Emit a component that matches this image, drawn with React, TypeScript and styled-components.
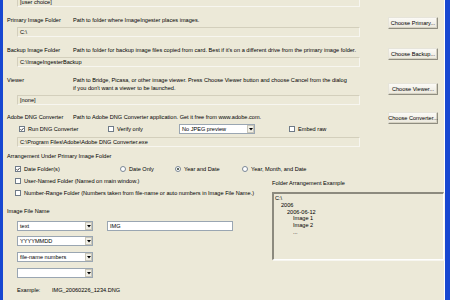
import React from "react";
import styled, { createGlobalStyle } from "styled-components";

const Global = createGlobalStyle`
  html, body { margin: 0; padding: 0; background: #ECE9D8; }
  * { box-sizing: border-box; }
`;

const Window = styled.div`
  width: 450px;
  height: 300px;
  overflow: hidden;
  background: #ece9d8;
  border-left: 3px solid #1747d1;
  border-right: 5px solid #1747d1;
  box-shadow: inset -1px 0 0 #ffffff;
  padding-left: 4px;
  display: flex;
  flex-direction: column;
  font-family: "Liberation Sans", Arial, sans-serif;
  font-size: 5.6px;
  line-height: 8px;
  color: #000;
`;

const Section = styled.div<{ $mt: number }>`
  display: flex;
  align-items: flex-start;
  margin-top: ${(p) => p.$mt}px;
`;

const Stack = styled.div`
  width: 353px;
  display: flex;
  flex-direction: column;
`;

const HeaderRow = styled.div`
  display: flex;
  min-height: 8px;
`;

const Label = styled.div`
  width: 66px;
  flex: none;
  white-space: nowrap;
`;

const Desc = styled.div`
  flex: 1;
  white-space: nowrap;
`;

const Field = styled.div<{ $mt?: number }>`
  margin-left: 10px;
  margin-top: ${(p) => (p.$mt ?? 3)}px;
  height: 10px;
  border: 1px solid #d3cfbc;
  border-right-color: #f7f6f0;
  border-bottom-color: #f7f6f0;
  padding-left: 2px;
  line-height: 8px;
  white-space: nowrap;
`;

const Button = styled.div<{ $mt: number }>`
  margin-left: 28px;
  margin-top: ${(p) => p.$mt}px;
  width: 50px;
  height: 12px;
  flex: none;
  display: flex;
  align-items: center;
  justify-content: center;
  background: linear-gradient(#fbfaf6, #ebe8dc);
  border: 1px solid #8f8d80;
  border-top-color: #e6e4da;
  border-left-color: #e6e4da;
  border-radius: 1px;
  box-shadow: inset -1px -1px 0 #d6d2c2;
  white-space: nowrap;
`;

const OptionsRow = styled.div`
  display: flex;
  align-items: center;
  height: 10px;
  margin-top: 3px;
`;

const Option = styled.div<{ $w?: number; $ml?: number }>`
  display: flex;
  align-items: center;
  gap: 3px;
  ${(p) => (p.$w ? `width: ${p.$w}px; flex: none;` : "")}
  margin-left: ${(p) => p.$ml ?? 0}px;
  white-space: nowrap;
  height: 8px;
`;

const CheckBox = styled.div`
  width: 6px;
  height: 6px;
  flex: none;
  background: #fff;
  border: 1px solid #6f7b88;
  display: flex;
  align-items: center;
  justify-content: center;
`;

const Radio = styled.div<{ $on?: boolean }>`
  width: 6px;
  height: 6px;
  flex: none;
  border-radius: 50%;
  background: #fff;
  border: 1px solid #7a8796;
  display: flex;
  align-items: center;
  justify-content: center;
  &::after {
    content: "";
    display: ${(p) => (p.$on ? "block" : "none")};
    width: 2px;
    height: 2px;
    border-radius: 50%;
    background: #2a3a2a;
  }
`;

const SelectBox = styled.div<{ $w: number; $ml?: number }>`
  width: ${(p) => p.$w}px;
  margin-left: ${(p) => p.$ml ?? 0}px;
  height: 10px;
  flex: none;
  background: #fff;
  border: 1px solid #9aa6b2;
  display: flex;
  align-items: stretch;
`;

const SelectText = styled.div`
  flex: 1;
  padding-left: 2px;
  line-height: 8px;
  white-space: nowrap;
  overflow: hidden;
`;

const DropBtn = styled.div`
  width: 7px;
  flex: none;
  background: #f1efe6;
  border: 1px solid #c9c6b8;
  display: flex;
  align-items: center;
  justify-content: center;
`;

const TextInput = styled.div<{ $w: number; $ml: number }>`
  width: ${(p) => p.$w}px;
  margin-left: ${(p) => p.$ml}px;
  height: 10px;
  flex: none;
  background: #fff;
  border: 1px solid #9aa6b2;
  padding-left: 2px;
  line-height: 8px;
`;

const Heading = styled.div<{ $mt: number }>`
  margin-top: ${(p) => p.$mt}px;
  height: 8px;
  white-space: nowrap;
`;

const CheckLine = styled.div<{ $mt: number }>`
  display: flex;
  align-items: center;
  height: 8px;
  margin-top: ${(p) => p.$mt}px;
  padding-left: 8px;
  white-space: nowrap;
`;

const Lower = styled.div`
  display: flex;
  align-items: flex-start;
`;

const LeftCol = styled.div`
  width: 265px;
  flex: none;
  display: flex;
  flex-direction: column;
`;

const RightCol = styled.div`
  width: 172px;
  flex: none;
  margin-top: 6px;
  display: flex;
  flex-direction: column;
`;

const InputRow = styled.div<{ $mt: number }>`
  display: flex;
  align-items: center;
  margin-top: ${(p) => p.$mt}px;
  padding-left: 10px;
`;

const ExampleRow = styled.div`
  display: flex;
  margin-top: 8px;
  padding-left: 10px;
  height: 8px;
  white-space: nowrap;
`;

const ExampleKey = styled.div`
  width: 35px;
  flex: none;
`;

const TreeBox = styled.div`
  margin-top: 5px;
  height: 68px;
  border: 1px solid #ffffff;
  border-top: 2px solid #8c8a7e;
  border-left: 2px solid #8c8a7e;
  box-shadow: 1px 1px 0 #f7f6f0;
  padding: 1px 0 0 1px;
  display: flex;
  flex-direction: column;
`;

const TreeLine = styled.div<{ $indent: number }>`
  padding-left: ${(p) => p.$indent}px;
  height: 6.8px;
  line-height: 6.8px;
  white-space: nowrap;
`;

const Check = () => (
  <svg width="5" height="5" viewBox="0 0 5 5">
    <path d="M0.6 2.2 L1.9 3.6 L4.4 0.8" stroke="#222" strokeWidth="1.1" fill="none" />
  </svg>
);

const Arrow = () => (
  <svg width="4" height="3" viewBox="0 0 4 3">
    <path d="M0 0 H4 L2 2.5 Z" fill="#000" />
  </svg>
);

const Select: React.FC<{ w: number; text?: string; ml?: number }> = ({ w, text, ml }) => (
  <SelectBox $w={w} $ml={ml}>
    <SelectText>{text}</SelectText>
    <DropBtn>
      <Arrow />
    </DropBtn>
  </SelectBox>
);

export default function App() {
  return (
    <>
      <Global />
      <Window>
        <Section $mt={0}>
          <Stack>
            <Field $mt={-3}>[user choice]</Field>
          </Stack>
        </Section>

        <Section $mt={9}>
          <Stack>
            <HeaderRow>
              <Label>Primary Image Folder</Label>
              <Desc>Path to folder where ImageIngester places images.</Desc>
            </HeaderRow>
            <Field>C:\</Field>
          </Stack>
          <Button $mt={1}>Choose Primary...</Button>
        </Section>

        <Section $mt={9}>
          <Stack>
            <HeaderRow>
              <Label>Backup Image Folder</Label>
              <Desc>
                Path to folder for backup image files copied from card. Best if it's on a different drive from the primary image folder.
              </Desc>
            </HeaderRow>
            <Field>C:\ImageIngesterBackup</Field>
          </Stack>
          <Button $mt={2}>Choose Backup...</Button>
        </Section>

        <Section $mt={9}>
          <Stack>
            <HeaderRow>
              <Label>Viewer</Label>
              <Desc>
                Path to Bridge, Picasa, or other image viewer. Press Choose Viewer button and choose Cancel from the dialog
                <br />
                if you don't want a viewer to be launched.
              </Desc>
            </HeaderRow>
            <Field>[none]</Field>
          </Stack>
          <Button $mt={7}>Choose Viewer...</Button>
        </Section>

        <Section $mt={8}>
          <Stack>
            <HeaderRow>
              <Label>Adobe DNG Converter</Label>
              <Desc>Path to Adobe DNG Converter application. Get it free from www.adobe.com.</Desc>
            </HeaderRow>
            <OptionsRow>
              <Option $w={89} $ml={12}>
                <CheckBox>
                  <Check />
                </CheckBox>
                Run DNG Converter
              </Option>
              <Option $w={71}>
                <CheckBox />
                Verify only
              </Option>
              <Select w={76} text="No JPEG preview" />
              <Option $ml={34}>
                <CheckBox />
                Embed raw
              </Option>
            </OptionsRow>
            <Field>C:\Program Files\Adobe\Adobe DNG Converter.exe</Field>
          </Stack>
          <Button $mt={-1}>Choose Converter...</Button>
        </Section>

        <Heading $mt={5}>Arrangement Under Primary Image Folder</Heading>
        <CheckLine $mt={5}>
          <Option $w={105}>
            <CheckBox>
              <Check />
            </CheckBox>
            Date Folder(s)
          </Option>
          <Option $w={55}>
            <Radio />
            Date Only
          </Option>
          <Option $w={67}>
            <Radio $on />
            Year and Date
          </Option>
          <Option>
            <Radio />
            Year, Month, and Date
          </Option>
        </CheckLine>

        <Lower>
          <LeftCol>
            <CheckLine $mt={4}>
              <Option>
                <CheckBox />
                User-Named Folder (Named on main window.)
              </Option>
            </CheckLine>
            <CheckLine $mt={4}>
              <Option>
                <CheckBox />
                Number-Range Folder (Numbers taken from file-name or auto numbers in Image File Name.)
              </Option>
            </CheckLine>
            <Heading $mt={10}>Image File Name</Heading>
            <InputRow $mt={6}>
              <Select w={76} text="text" />
              <TextInput $w={126} $ml={14}>IMG</TextInput>
            </InputRow>
            <InputRow $mt={5}>
              <Select w={76} text="YYYYMMDD" />
            </InputRow>
            <InputRow $mt={6}>
              <Select w={76} text="file-name numbers" />
            </InputRow>
            <InputRow $mt={6}>
              <Select w={76} />
            </InputRow>
            <ExampleRow>
              <ExampleKey>Example:</ExampleKey>
              IMG_20060226_1234.DNG
            </ExampleRow>
          </LeftCol>
          <RightCol>
            <Heading $mt={0}>Folder Arrangement Example</Heading>
            <TreeBox>
              <TreeLine $indent={0}>C:\</TreeLine>
              <TreeLine $indent={6}>2006</TreeLine>
              <TreeLine $indent={12}>2006-06-12</TreeLine>
              <TreeLine $indent={18}>Image 1</TreeLine>
              <TreeLine $indent={18}>Image 2</TreeLine>
              <TreeLine $indent={18}>...</TreeLine>
            </TreeBox>
          </RightCol>
        </Lower>
      </Window>
    </>
  );
}
